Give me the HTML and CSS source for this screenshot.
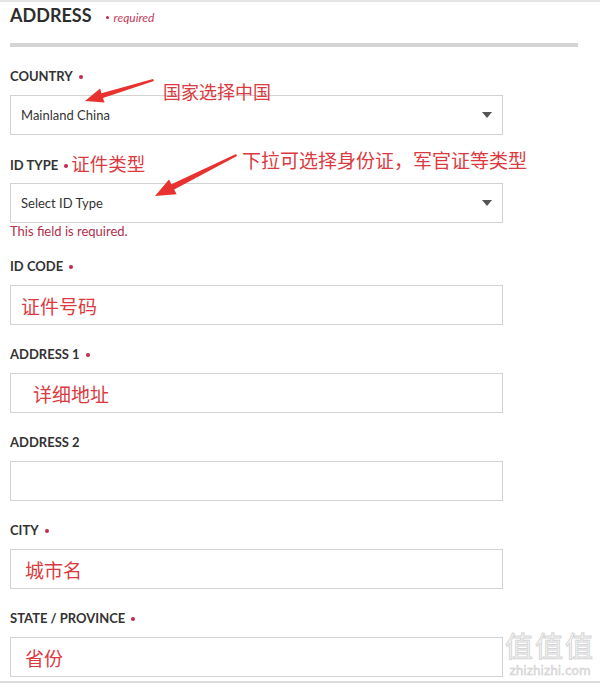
FILE: index.html
```html
<!DOCTYPE html>
<html lang="zh">
<head>
    <meta charset="UTF-8">
    <meta name="viewport" content="width=device-width, initial-scale=1.0">
    <title>Address</title>
    <link rel="stylesheet" href="styles.css">
</head>
<body>

    <div class="page">
        <div class="head">
            <h2>ADDRESS</h2>
            <span class="req"><i class="dot"></i>required</span>
        </div>
        <div class="divider"></div>

        <div class="fields">
            <div class="field">
                <label>COUNTRY<i class="dot"></i></label>
                <div class="box select">
                    <span>Mainland China</span>
                    <b class="caret"></b>
                </div>
            </div>

            <div class="field">
                <label>ID TYPE<i class="dot"></i><span class="note inline">证件类型</span></label>
                <div class="box select">
                    <span>Select ID Type</span>
                    <b class="caret"></b>
                </div>
                <div class="error">This field is required.</div>
            </div>

            <div class="field">
                <label>ID CODE<i class="dot"></i></label>
                <div class="box"><span class="note in-box">证件号码</span></div>
            </div>

            <div class="field">
                <label>ADDRESS 1<i class="dot"></i></label>
                <div class="box"><span class="note in-box far">详细地址</span></div>
            </div>

            <div class="field">
                <label>ADDRESS 2</label>
                <div class="box"></div>
            </div>

            <div class="field">
                <label>CITY<i class="dot"></i></label>
                <div class="box"><span class="note in-box mid">城市名</span></div>
            </div>

            <div class="field">
                <label>STATE / PROVINCE<i class="dot"></i></label>
                <div class="box"><span class="note in-box mid">省份</span></div>
            </div>
        </div>

        <!-- annotations drawn over the form -->
        <div class="note callout one">国家选择中国</div>
        <div class="note callout two">下拉可选择身份证，军官证等类型</div>
        <svg class="arrows" width="600" height="683" viewBox="0 0 600 683">
            <polygon points="153,79 101.5,93.2 100.1,88.6 85,101 104.6,102.6 102.9,98 154,81" fill="#e8322f"/>
            <polygon points="236,154 171.4,184.2 169,179.5 155,196 176.6,194.3 174.2,189.6 237,156" fill="#e8322f"/>
        </svg>

        <div class="mark">
            <div class="mark-big">值值值</div>
            <div class="mark-url">zhizhizhi.com</div>
        </div>
    </div>

</body>
</html>
```

FILE: styles.css
```css
* {
    margin: 0;
    padding: 0;
    box-sizing: border-box;
}

body {
    background: #fff;
    font-family: Lato, "Noto Sans", sans-serif;
    color: #333;
}

.page {
    position: relative;
    height: 683px;
    overflow: hidden;
    border-top: 2px solid #e4e4e4;
    border-bottom: 2px solid #dcdcdc;
    padding: 0 0 0 10px;
}

.head {
    display: flex;
    align-items: baseline;
    gap: 14px;
    padding-top: 1px;
}

h2 {
    font-size: 18px;
    font-weight: 700;
    line-height: 24px;
    color: #2e2e2e;
}

.req {
    font-size: 12px;
    font-style: italic;
    color: #c4395a;
}

.dot {
    display: inline-block;
    width: 4px;
    height: 4px;
    border-radius: 50%;
    background: #c4284c;
    margin: 0 0 0 6px;
    vertical-align: 2px;
}

.req .dot {
    width: 3px;
    height: 3px;
    margin: 0 5px 0 0;
    vertical-align: 3px;
}

.divider {
    width: 568px;
    height: 4px;
    background: #d4d4d4;
    margin-top: 16px;
}

.fields {
    margin-top: 19px;
}

.field {
    margin-bottom: 19px;
}

label {
    display: block;
    height: 20px;
    font-size: 13px;
    font-weight: 700;
    line-height: 20px;
    margin-bottom: 9px;
    color: #333;
    white-space: nowrap;
}

.box {
    width: 493px;
    height: 40px;
    border: 1px solid #d2d2d2;
    display: flex;
    align-items: center;
    padding: 0 10px;
    font-size: 13px;
    color: #333;
}

.select {
    justify-content: space-between;
}

.caret {
    width: 0;
    height: 0;
    border-left: 5px solid transparent;
    border-right: 5px solid transparent;
    border-top: 6px solid #555;
}

.error {
    font-size: 13px;
    line-height: 15px;
    color: #b0304a;
    margin-bottom: -2px;
    padding-top: 1px;
}

.note {
    font-family: "Noto Sans CJK SC", sans-serif;
    font-size: 18px;
    font-weight: 400;
    color: #db3a40;
}

.inline {
    margin-left: 3px;
    font-size: 18.5px;
    line-height: 1;
    vertical-align: -1px;
}

.in-box {
    font-size: 19px;
}

.in-box.mid {
    margin-left: 4px;
}

.in-box.far {
    margin-left: 12px;
}

.callout {
    position: absolute;
    line-height: 22px;
}

.callout.one {
    left: 163px;
    top: 78px;
}

.callout.two {
    left: 242px;
    top: 147px;
    font-size: 19px;
}

.arrows {
    position: absolute;
    left: 0;
    top: -2px;
}

.mark {
    position: absolute;
    right: 5px;
    bottom: 3px;
    text-align: center;
}

.mark-big {
    font-family: "Noto Sans CJK SC", sans-serif;
    font-size: 28px;
    line-height: 38px;
    color: #fafafa;
    -webkit-text-stroke: 1px #d6d6d6;
    letter-spacing: 2px;
}

.mark-url {
    font-family: "DejaVu Sans", sans-serif;
    font-size: 12px;
    line-height: 14px;
    color: #e6e6e6;
    -webkit-text-stroke: 0.5px #cfcfcf;
}
```
